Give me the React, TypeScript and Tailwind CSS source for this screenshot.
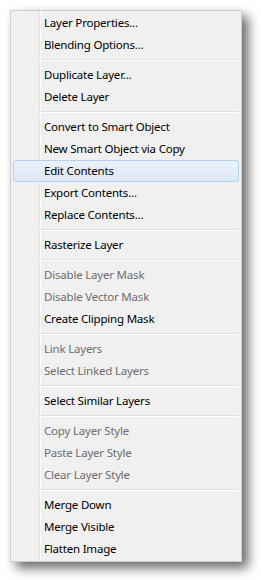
import React from "react";

type Item = { label: string; disabled?: boolean; hover?: boolean } | "sep";

const items: Item[] = [
  { label: "Layer Properties..." },
  { label: "Blending Options..." },
  "sep",
  { label: "Duplicate Layer..." },
  { label: "Delete Layer" },
  "sep",
  { label: "Convert to Smart Object" },
  { label: "New Smart Object via Copy" },
  { label: "Edit Contents", hover: true },
  { label: "Export Contents..." },
  { label: "Replace Contents..." },
  "sep",
  { label: "Rasterize Layer" },
  "sep",
  { label: "Disable Layer Mask", disabled: true },
  { label: "Disable Vector Mask", disabled: true },
  { label: "Create Clipping Mask" },
  "sep",
  { label: "Link Layers", disabled: true },
  { label: "Select Linked Layers", disabled: true },
  "sep",
  { label: "Select Similar Layers" },
  "sep",
  { label: "Copy Layer Style", disabled: true },
  { label: "Paste Layer Style", disabled: true },
  { label: "Clear Layer Style", disabled: true },
  "sep",
  { label: "Merge Down" },
  { label: "Merge Visible" },
  { label: "Flatten Image" },
];

export default function App() {
  return (
    <div className="w-[261px] h-[580px] bg-white p-[10px]" style={{ fontFamily: '"Noto Sans", "Open Sans", sans-serif' }}>
      <div className="w-[232px] border border-[#cfcfcf] bg-[linear-gradient(to_right,#f0f0f0_28px,#e2e3e3_28px,#e2e3e3_29px,#ffffff_29px,#ffffff_30px,#f0f0f0_30px)] py-px px-[2px] shadow-[6px_6px_11px_rgba(0,0,0,0.6)]">
        {items.map((it, i) =>
          it === "sep" ? (
            <div key={i} className="h-[8px] pl-[26px] flex flex-col">
              <div className="h-[3px]" />
              <div className="h-px bg-[#e0e0e0]" />
              <div className="h-px bg-white" />
            </div>
          ) : (
            <div
              key={i}
              className={
                "h-[22px] leading-[20px] text-[11.5px] tracking-[-0.2px] pl-[30px] whitespace-nowrap rounded-[3px] border " +
                (it.hover
                  ? "border-[#b4d1f2] bg-[linear-gradient(to_bottom,#eaf1fa,#dde8f6)] "
                  : "border-transparent ") +
                (it.disabled ? "text-[#6d6d6d]" : "text-black")
              }
            >
              {it.label}
            </div>
          )
        )}
      </div>
    </div>
  );
}
